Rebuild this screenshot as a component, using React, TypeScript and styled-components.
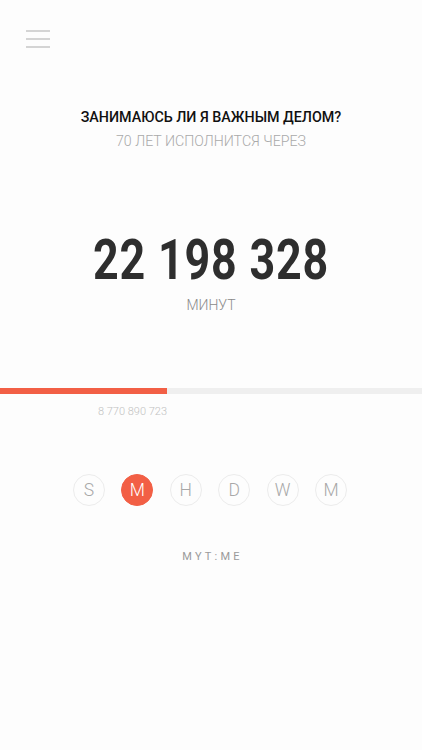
import React from "react";
import styled, { createGlobalStyle } from "styled-components";

const Global = createGlobalStyle`
  html, body { margin: 0; padding: 0; background: #fdfdfd; }
  body { font-family: Roboto, "Noto Sans", sans-serif; }
`;

const Page = styled.div`
  width: 422px;
  height: 750px;
  background: #fdfdfd;
  display: flex;
  flex-direction: column;
  overflow: hidden;
`;

const Burger = styled.button`
  margin: 30px 0 0 26px;
  width: 24px;
  padding: 0;
  border: 0;
  background: none;
  display: flex;
  flex-direction: column;
  gap: 6.5px;
  span {
    display: block;
    height: 1.5px;
    background: #d4d4d4;
  }
`;

const Heading = styled.h1`
  margin: 60px 0 0;
  text-align: center;
  font-size: 14.3px;
  font-weight: 500;
  color: #111;
  line-height: 18px;
`;

const Sub = styled.p`
  margin: 6px 0 0;
  text-align: center;
  font-size: 14.2px;
  font-weight: 300;
  color: #a9a9a9;
  line-height: 18px;
`;

const Count = styled.div`
  margin: 80px 0 0;
  text-align: center;
  font-size: 56px;
  font-weight: 700;
  color: #2e2e2e;
  line-height: 60px;
  transform: scaleX(0.8);
  letter-spacing: 1px;
`;

const Unit = styled.p`
  margin: 6px 0 0;
  text-align: center;
  font-size: 14px;
  font-weight: 300;
  color: #8a8a8a;
  line-height: 18px;
`;

const Track = styled.div`
  margin-top: 74px;
  height: 6px;
  background: #efefef;
  display: flex;
`;

const Fill = styled.div`
  height: 100%;
  background: #f25f45;
`;

const Remain = styled.div`
  font-size: 11px;
  font-weight: 300;
  color: #c2c2c2;
  line-height: 14px;
  margin-top: 11px;
  text-align: right;
`;

const Units = styled.div`
  margin-top: 55.5px;
  display: flex;
  justify-content: center;
  gap: 16.4px;
  padding-right: 2px;
`;

const Dot = styled.div<{ $on?: boolean }>`
  width: 32px;
  height: 32px;
  border-radius: 50%;
  box-sizing: border-box;
  border: 1px solid ${(p) => (p.$on ? "#f25f45" : "#ececec")};
  background: ${(p) => (p.$on ? "#f25f45" : "transparent")};
  color: ${(p) => (p.$on ? "#fff" : "#a8a8a8")};
  display: flex;
  align-items: center;
  justify-content: center;
  font-size: 17.5px;
  font-weight: 300;
`;

const Brand = styled.div`
  margin-top: 44px;
  text-align: center;
  font-size: 11px;
  letter-spacing: 3.2px;
  color: #9a9a9a;
  padding-left: 3px;
`;

export default function App() {
  const left = 22198328;
  const pct = 167 / 422;
  const units = ["S", "M", "H", "D", "W", "M"];
  return (
    <Page>
      <Global />
      <Burger aria-label="menu">
        <span />
        <span />
        <span />
      </Burger>
      <Heading>ЗАНИМАЮСЬ ЛИ Я ВАЖНЫМ ДЕЛОМ?</Heading>
      <Sub>70 ЛЕТ ИСПОЛНИТСЯ ЧЕРЕЗ</Sub>
      <Count>{left.toLocaleString("ru-RU").replace(/\s/g, " ")}</Count>
      <Unit>МИНУТ</Unit>
      <Track>
        <Fill style={{ width: `${pct * 100}%` }} />
      </Track>
      <Remain style={{ width: `${pct * 100}%` }}>8 770 890 723</Remain>
      <Units>
        {units.map((u, i) => (
          <Dot key={i} $on={i === 1}>
            {u}
          </Dot>
        ))}
      </Units>
      <Brand>MYT:ME</Brand>
    </Page>
  );
}
